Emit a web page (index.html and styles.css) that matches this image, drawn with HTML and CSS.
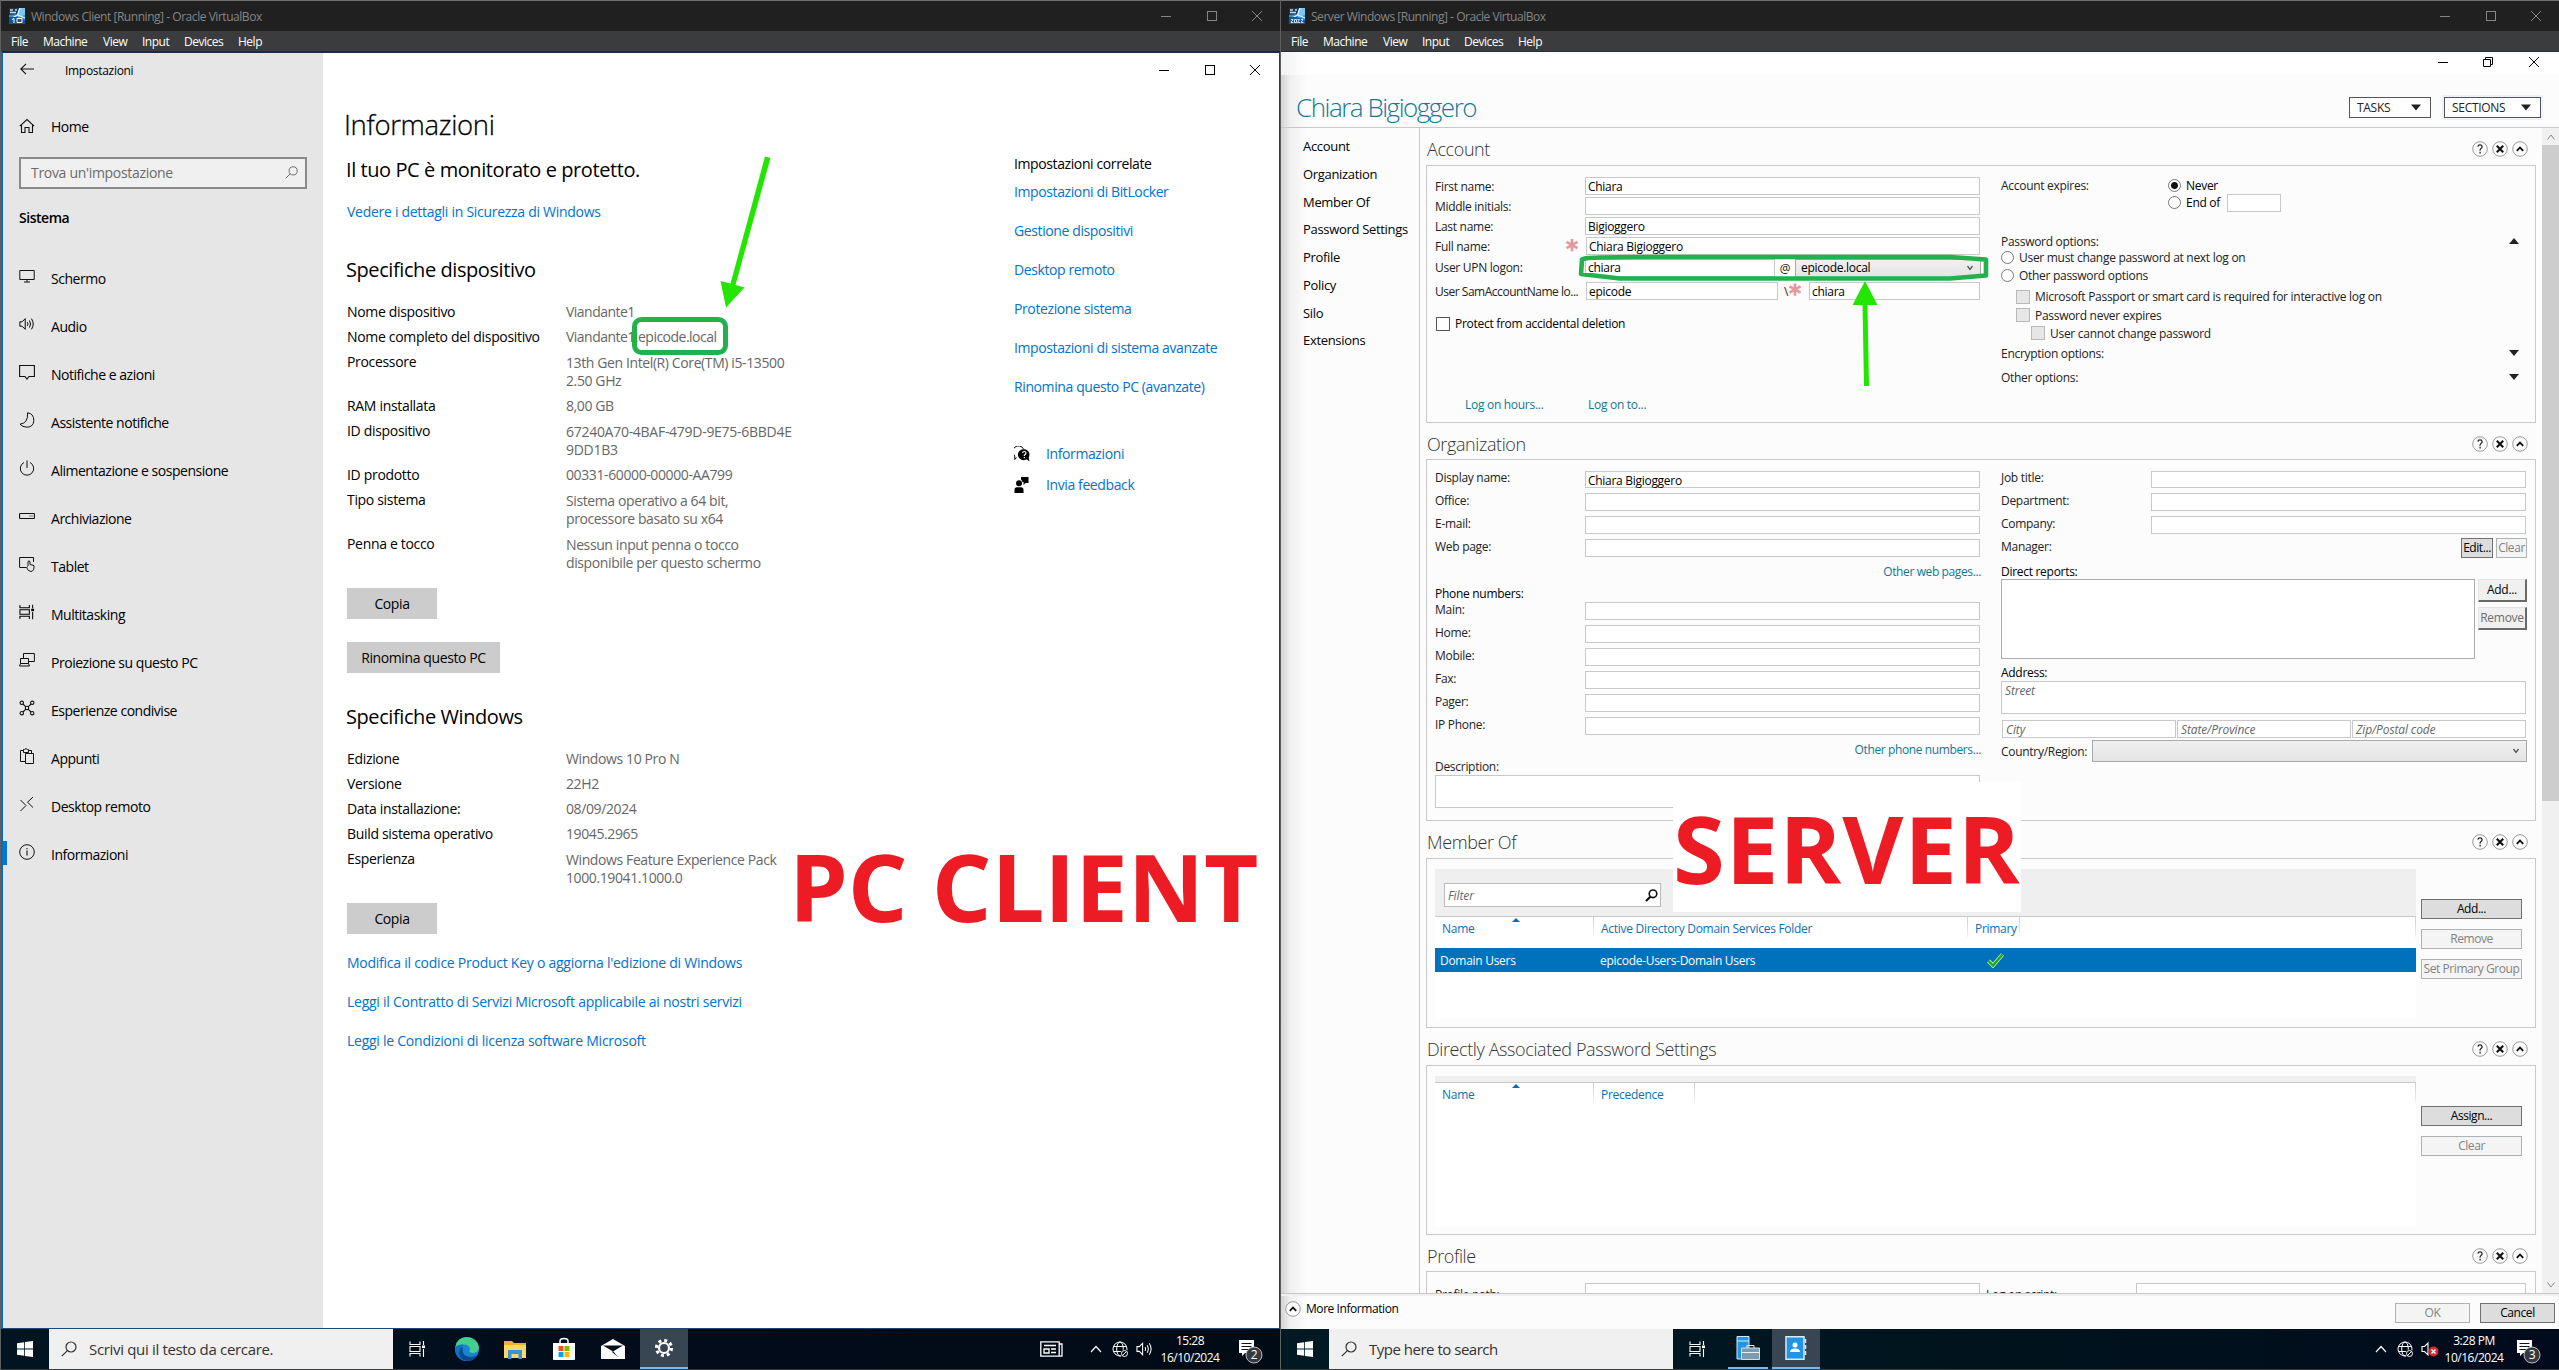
FILE: index.html
```html
<!DOCTYPE html>
<html lang="it">
<head>
<meta charset="utf-8">
<title>Oracle VirtualBox</title>
<link rel="stylesheet" href="styles.css">
</head>
<body>
<svg class="defs" width="0" height="0">
  <defs>
    <symbol id="min" viewBox="0 0 10 10"><path d="M0 5.5H10" stroke="currentColor"/></symbol>
    <symbol id="max" viewBox="0 0 10 10"><rect x=".5" y=".5" width="9" height="9" fill="none" stroke="currentColor"/></symbol>
    <symbol id="restore" viewBox="0 0 10 10"><path d="M.5 2.5H7.5V9.500H.5ZM2.500 2.500V.5H9.500V7.500H7.500" fill="none" stroke="currentColor"/></symbol>
    <symbol id="close" viewBox="0 0 10 10"><path d="M0 0L10 10M10 0L0 10" stroke="currentColor"/></symbol>
    <symbol id="ask" viewBox="0 0 16 16"><circle cx="8" cy="8" r="7.300" fill="#fbfbfb" stroke="#9a9a9a"/><path d="M5.900 5.600Q6.100 3.900 8 3.900T10.100 5.700Q10.100 6.800 9 7.500T8.100 9.600M8.100 10.800V12.400" fill="none" stroke="#222" stroke-width="1.300"/></symbol>
    <symbol id="xc" viewBox="0 0 16 16"><circle cx="8" cy="8" r="7.300" fill="#fbfbfb" stroke="#9a9a9a"/><path d="M4.800 4.800L11.200 11.200M11.200 4.800L4.800 11.200" stroke="#111" stroke-width="2.100"/></symbol>
    <symbol id="up" viewBox="0 0 16 16"><circle cx="8" cy="8" r="7.300" fill="#fbfbfb" stroke="#9a9a9a"/><path d="M4.800 9.800L8 6.500L11.200 9.800" fill="none" stroke="#111" stroke-width="1.800"/></symbol>
    <symbol id="star" viewBox="0 0 16 16"><path d="M8 1V15M1.700 4.500L14.300 11.500M14.300 4.500L1.700 11.500" stroke="#e5989b" stroke-width="3"/></symbol>
    <symbol id="tdown" viewBox="0 0 10 6"><path d="M0 0H10L5 6Z" fill="#222"/></symbol>
    <symbol id="tup" viewBox="0 0 10 6"><path d="M0 6H10L5 0Z" fill="#222"/></symbol>
    <symbol id="chev" viewBox="0 0 8 6"><path d="M1.500 1L4 4.500L6.500 1" fill="none" stroke="#555" stroke-width="1.300"/></symbol>
    <symbol id="win" viewBox="0 0 16 16"><path d="M0 2.200L7.200 1.200V7.600H0ZM8 1.100L16 0V7.600H8ZM0 8.400H7.200V14.800L0 13.800ZM8 8.400H16V16L8 14.900Z" fill="#fff"/></symbol>
    <symbol id="mag" viewBox="0 0 16 16"><circle cx="10" cy="6" r="5" fill="none" stroke="currentColor" stroke-width="1.200"/><path d="M6.400 9.600L.8 15.200" stroke="currentColor" stroke-width="1.200"/></symbol>
    <symbol id="task" viewBox="0 0 17 16"><path d="M1 .5V3.500H11V.5M1 15.500V12.500H11V15.500M1 5.500H11V10.500H1ZM14.500 0V4M14.500 8V16" fill="none" stroke="currentColor" stroke-width="1.100"/><rect x="13" y="4.500" width="3" height="2.600" fill="currentColor"/></symbol>
    <symbol id="tchev" viewBox="0 0 12 8"><path d="M1 7L6 1.500L11 7" fill="none" stroke="#fff" stroke-width="1.200"/></symbol>
    <symbol id="globe" viewBox="0 0 17 17"><circle cx="8" cy="8" r="7" fill="none" stroke="#fff"/><ellipse cx="8" cy="8" rx="3.300" ry="7" fill="none" stroke="#fff"/><path d="M1.500 5.500H14.500M1.500 10.500H9" stroke="#fff"/><circle cx="12.500" cy="12.500" r="4" fill="#020c18"/><circle cx="12.500" cy="12.500" r="3" fill="none" stroke="#fff"/><path d="M10.500 14.500L14.500 10.500" stroke="#fff"/></symbol>
    <symbol id="sound" viewBox="0 0 18 16"><path d="M1 5.500H3.500L7 2V14L3.500 10.500H1ZM9.500 6Q10.800 8 9.500 10M11.800 4Q14.200 8 11.800 12M14 2Q18 8 14 14" fill="none" stroke="currentColor" stroke-width="1.100"/></symbol>
    <symbol id="mute" viewBox="0 0 18 16"><path d="M1 5.500H3.500L7 2V14L3.500 10.500H1Z" fill="none" stroke="#fff" stroke-width="1.100"/><circle cx="12.500" cy="10.500" r="5" fill="#d7282f"/><path d="M10.500 8.500L14.500 12.500M14.500 8.500L10.500 12.500" stroke="#fff" stroke-width="1.400"/></symbol>
    <symbol id="note" viewBox="0 0 26 26"><path d="M1 1H16V14H7L4 17V14H1Z" fill="#fff"/><path d="M3.500 4.500H13.500M3.500 7.500H13.500M3.500 10.500H13.500" stroke="#06121f"/><circle cx="16" cy="16" r="8" fill="#343a40" stroke="#bbb"/></symbol>
    <symbol id="vbox" viewBox="0 0 16 16"><rect width="16" height="16" fill="#2a93dc"/><path d="M0 0H10L8 6L0 7Z" fill="#1b3850"/><path d="M10 0H16V7L9 9Z" fill="#7cc6f2"/><path d="M1 2H4M1 4.500H7M6 2H8" stroke="#d4dde3" stroke-width="1.300"/><path d="M11 0L8.500 7L16 10M8.500 7L3 10" stroke="#e8f5fc" stroke-width="1.200" fill="none"/><path d="M0 9L7 9L16 12V16H0Z" fill="#0e58a0"/></symbol>
  </defs>
</svg>
<div class="desk">

<!-- ================= client machine ================= -->
<section class="vm">
  <header class="title"><svg class="i16" viewBox="0 0 16 16"><use href="#vbox"/><path d="M3 11.500L5 10.500V15M8 10.500H13V14.500H8Z" stroke="#fff" fill="none"/></svg><span>Windows Client [Running] - Oracle VirtualBox</span>
    <div class="ctl"><i><svg><use href="#min"/></svg></i><i><svg><use href="#max"/></svg></i><i><svg><use href="#close"/></svg></i></div></header>
  <nav class="menu"><span class="m1">File</span><span class="m2">Machine</span><span class="m3">View</span><span class="m4">Input</span><span class="m5">Devices</span><span class="m6">Help</span></nav>
  <div class="settings">
    <aside class="side">
      <div class="back"><svg width="14" height="12" viewBox="0 0 14 12"><path d="M14 6H1M6 .8L.8 6L6 11.200" fill="none" stroke="#111" stroke-width="1.100"/></svg><span>Impostazioni</span></div>
      <div class="item home"><svg viewBox="0 0 16 16"><path d="M.8 8.200L8 1.500L15.200 8.200M2.500 6.800V14.500H6V9.500H10V14.500H13.500V6.800" fill="none" stroke="#111" stroke-width="1.100"/></svg>Home</div>
      <div class="find"><span>Trova un'impostazione</span><svg width="13" height="13"><use href="#mag"/></svg></div>
      <div class="sys">Sistema</div>
      <div class="item"><svg viewBox="0 0 16 16"><path d="M.8 2.500H15.200V11.500H.8ZM8 11.500V14M5 14H11" fill="none" stroke="#111"/></svg>Schermo</div>
      <div class="item"><svg viewBox="0 0 18 16"><use href="#sound" width="18" height="16"/></svg>Audio</div>
      <div class="item"><svg viewBox="0 0 16 16"><path d="M.6 1.500H15.400V12.500H10L8 15L6 12.500H.6Z" fill="none" stroke="#111" stroke-width="1.100"/></svg>Notifiche e azioni</div>
      <div class="item"><svg viewBox="0 0 16 16"><path d="M8.500 .8Q14.800 1.500 14.800 8.500Q14.500 15 8 15.200Q3.500 15.200 1 12.200Q9.500 11 8.500 .8Z" fill="none" stroke="#111"/></svg>Assistente notifiche</div>
      <div class="item"><svg viewBox="0 0 16 16"><path d="M8 .5V8M5 2.500A6.700 6.700 0 1 0 11 2.500" fill="none" stroke="#111"/></svg>Alimentazione e sospensione</div>
      <div class="item"><svg viewBox="0 0 16 16"><rect x=".6" y="5.500" width="14.800" height="5" rx=".6" fill="none" stroke="#111" stroke-width="1.100"/><path d="M10.500 8H11.500M12.500 8H13.500" stroke="#111"/></svg>Archiviazione</div>
      <div class="item"><svg viewBox="0 0 16 16"><path d="M7 11.500H.6V1.500H14.500V6M9 10V5.500Q10 4.300 11 5.500V8.500L15 9.500Q15.500 15 12 15.500Q9 15.500 7.500 11.500Q8 10.300 9 11" fill="none" stroke="#111"/></svg>Tablet</div>
      <div class="item"><svg viewBox="0 0 17 16"><use href="#task" width="17" height="16"/></svg>Multitasking</div>
      <div class="item"><svg viewBox="0 0 16 16"><path d="M4.500 7V1.500H15.400V9.500H10M1.500 6.500H9.500V11.500H1.500ZM.5 14H10.500L9.500 11.500H1.500Z" fill="none" stroke="#111"/></svg>Proiezione su questo PC</div>
      <div class="item"><svg viewBox="0 0 16 16"><g fill="none" stroke="#111" stroke-width="1.100"><circle cx="2.800" cy="2.800" r="1.700"/><circle cx="13.200" cy="2.800" r="1.700"/><circle cx="2.800" cy="13.200" r="1.700"/><circle cx="13.200" cy="13.200" r="1.700"/><circle cx="8" cy="8" r="1.700"/><path d="M4 4L6.800 6.800M12 4L9.200 6.800M4 12L6.800 9.200M12 12L9.200 9.200"/></g></svg>Esperienze condivise</div>
      <div class="item"><svg viewBox="0 0 16 16"><path d="M6.500 13.500H1.500V2.500H4.500M9.500 2.500H12.500V5.500M4.500 1.500H5.500Q7 -.5 8.500 1.500H9.500V4.500H4.500ZM6.500 5.500H14.500V15.500H6.500Z" fill="none" stroke="#111"/></svg>Appunti</div>
      <div class="item"><svg viewBox="0 0 16 16"><path d="M1.500 4L7 9.500L1.500 15M14 1L8.500 6.200L14 11.500" fill="none" stroke="#111"/></svg>Desktop remoto</div>
      <div class="item on"><svg viewBox="0 0 16 16"><circle cx="8" cy="8" r="7.300" fill="none" stroke="#111"/><path d="M8 6.500V11.500M8 4V5.200" stroke="#111" stroke-width="1.100"/></svg>Informazioni</div>
    </aside>
    <main class="info">
      <div class="ctl inner"><i><svg><use href="#min"/></svg></i><i><svg><use href="#max"/></svg></i><i><svg><use href="#close"/></svg></i></div>
      <div class="cols">
        <div class="specs">
          <h1>Informazioni</h1>
          <h2 class="ok">Il tuo PC è monitorato e protetto.</h2>
          <a class="sec">Vedere i dettagli in Sicurezza di Windows</a>
          <h2 class="dev">Specifiche dispositivo</h2>
          <dl>
            <dt>Nome dispositivo</dt><dd class="host">Viandante1</dd>
            <dt>Nome completo del dispositivo</dt><dd class="host">Viandante1.epicode.local</dd>
            <dt>Processore</dt><dd class="two">13th Gen Intel(R) Core(TM) i5-13500<br>2.50 GHz</dd>
            <dt>RAM installata</dt><dd>8,00 GB</dd>
            <dt>ID dispositivo</dt><dd class="two id">67240A70-4BAF-479D-9E75-6BBD4E<br>9DD1B3</dd>
            <dt>ID prodotto</dt><dd>00331-60000-00000-AA799</dd>
            <dt>Tipo sistema</dt><dd class="two">Sistema operativo a 64 bit,<br>processore basato su x64</dd>
            <dt>Penna e tocco</dt><dd class="two">Nessun input penna o tocco<br>disponibile per questo schermo</dd>
          </dl>
          <button class="gb">Copia</button>
          <button class="gb wide">Rinomina questo PC</button>
          <h2 class="wins">Specifiche Windows</h2>
          <dl>
            <dt>Edizione</dt><dd>Windows 10 Pro N</dd>
            <dt>Versione</dt><dd>22H2</dd>
            <dt>Data installazione:</dt><dd>08/09/2024</dd>
            <dt>Build sistema operativo</dt><dd>19045.2965</dd>
            <dt>Esperienza</dt><dd class="two">Windows Feature Experience Pack<br>1000.19041.1000.0</dd>
          </dl>
          <button class="gb">Copia</button>
          <div class="legal"><a>Modifica il codice Product Key o aggiorna l'edizione di Windows</a><a>Leggi il Contratto di Servizi Microsoft applicabile ai nostri servizi</a><a>Leggi le Condizioni di licenza software Microsoft</a></div>
        </div>
        <div class="related">
          <p>Impostazioni correlate</p>
          <a>Impostazioni di BitLocker</a><a>Gestione dispositivi</a><a>Desktop remoto</a><a>Protezione sistema</a><a>Impostazioni di sistema avanzate</a><a>Rinomina questo PC (avanzate)</a>
          <div class="help">
            <a><svg class="i16" viewBox="0 0 16 16"><path class="line" d="M2.500 11.500L.8 13.500V10A5.700 5.700 0 1 1 9.500 3"/><path d="M10.200 3.200A5.500 5.500 0 1 0 12.500 13.200L15.500 15.500L14.700 11.500A5.500 5.500 0 0 0 10.200 3.200Z"/><path class="q" d="M8.500 7Q8.800 5.500 10.300 5.500T12 7Q12 8.200 10.300 9.200V10M10.300 11V12.300"/></svg>Informazioni</a>
            <a><svg class="i16" viewBox="0 0 16 16"><circle cx="5" cy="6.200" r="3"/><path d="M.5 16V13Q.5 10.200 3 10.200H7Q9.500 10.200 9.500 13V16ZM7 0H14.500V6H11.500L9.500 8V5H8.500Q8 3 7 2.500Z"/></svg>Invia feedback</a>
          </div>
        </div>
      </div>
    </main>
  </div>
  <footer class="bar">
    <span class="start"><svg class="i16"><use href="#win"/></svg></span>
    <span class="search it-search"><svg class="i16"><use href="#mag"/></svg>Scrivi qui il testo da cercare.</span>
    <span class="tile tv"><svg width="17" height="16"><use href="#task"/></svg></span>
    <span class="tile"><svg width="24" height="24" viewBox="0 0 24 24"><circle cx="12" cy="12" r="12" fill="#1a84d2"/><path d="M.5 10Q2 0 12 0Q22 1 24 10Q24 16 17 16Q13 15.500 15 12.500Q15 8 9 7.500Q3 7.500 .5 10Z" fill="#43cf8c"/><path d="M.5 10Q3 7 8 7.500Q5 16 9 20Q12 23 15 23.500Q3 26 0 14Z" fill="#1270c4"/><path d="M8 10Q6 19 15 20Q19 20 22 18Q18 24.500 12 24Q3 22 4.500 15Q5 11 8 10Z" fill="#0a4a93"/></svg></span>
    <span class="tile"><svg width="24" height="20" viewBox="0 0 24 20"><path d="M1 2H9L11 4H23V19H1Z" fill="#f0b429"/><path d="M1 6H23V19H1Z" fill="#ffd766"/><path d="M5 11H19V20H15.500V15H8.500V20H5Z" fill="#3a93d8"/></svg></span>
    <span class="tile"><svg width="24" height="24" viewBox="0 0 24 24"><path d="M1 6H23V22Q23 23 22 23H2Q1 23 1 22Z" fill="#fff"/><path d="M8 6V4Q8 1.500 12 1.500T16 4V6" fill="none" stroke="#fff" stroke-width="1.500"/><path d="M6.500 9H11.500V14H6.500Z" fill="#f25022"/><path d="M12.500 9H17.500V14H12.500Z" fill="#7fba00"/><path d="M6.500 15H11.500V20H6.500Z" fill="#00a4ef"/><path d="M12.500 15H17.500V20H12.500Z" fill="#ffb900"/></svg></span>
    <span class="tile"><svg width="24" height="22" viewBox="0 0 24 22"><path d="M0 8L12 1L24 8V21H0Z" fill="#fff"/><path d="M2 7.500H22L12 13.500ZM12 13L17 19L11 14Z" fill="#04101d"/></svg></span>
    <span class="tile act"><svg width="20" height="20" viewBox="0 0 20 20"><circle cx="10" cy="10" r="5" fill="none" stroke="#fff" stroke-width="2.200"/><circle cx="10" cy="10" r="7.600" fill="none" stroke="#fff" stroke-width="3" stroke-dasharray="3 2.970"/></svg></span>
    <span class="tray t1">
      <svg width="23" height="16" viewBox="0 0 23 16"><path d="M.8 .8H19.200V15.200H.8ZM19.200 3H22V15.200H19M4 4.500H16M4 8H9V12H4ZM11 8H16M11 11.500H16" fill="none" stroke="#fff" stroke-width="1.300"/></svg>
      <svg class="c" width="12" height="8"><use href="#tchev"/></svg><svg class="g" width="17" height="17"><use href="#globe"/></svg><svg class="s" width="17" height="16"><use href="#sound"/></svg>
      <span class="clock">15:28<br>16/10/2024</span>
      <span class="notes"><svg width="26" height="26"><use href="#note"/></svg><b>2</b></span>
    </span>
  </footer>
</section>

<!-- ================= server machine ================= -->
<section class="vm server">
  <header class="title"><svg class="i16" viewBox="0 0 16 16"><use href="#vbox"/><path d="M2 11.500H4L2 14.500H4.500M5.500 11.500H7.500V14.500H5.500ZM8.500 11.500H10.500L8.500 14.500H11M12 11.500H14L12 14.500H14.500" stroke="#fff" fill="none" stroke-width=".8"/></svg><span>Server Windows [Running] - Oracle VirtualBox</span>
    <div class="ctl"><i><svg><use href="#min"/></svg></i><i><svg><use href="#max"/></svg></i><i><svg><use href="#close"/></svg></i></div></header>
  <nav class="menu"><span class="m1">File</span><span class="m2">Machine</span><span class="m3">View</span><span class="m4">Input</span><span class="m5">Devices</span><span class="m6">Help</span></nav>
  <div class="adac">
    <div class="ctl inner"><i><svg><use href="#min"/></svg></i><i><svg><use href="#restore"/></svg></i><i><svg><use href="#close"/></svg></i></div>
    <div class="who"><h1>Chiara Bigioggero</h1><button class="dd">TASKS<svg width="10" height="7"><use href="#tdown"/></svg></button><button class="dd sel">SECTIONS<svg width="10" height="7"><use href="#tdown"/></svg></button></div>
    <div class="body">
      <nav class="toc"><a>Account</a><a>Organization</a><a>Member Of</a><a>Password Settings</a><a>Profile</a><a>Policy</a><a>Silo</a><a>Extensions</a></nav>
      <div class="pages">
        <div class="sh">Account<span><svg><use href="#ask"/></svg><svg><use href="#xc"/></svg><svg><use href="#up"/></svg></span></div>
        <div class="box acc">
          <div class="l">
            <div class="r20"><label>First name:</label><b class="in">Chiara</b></div>
            <div class="r20"><label>Middle initials:</label><b class="in"></b></div>
            <div class="r20"><label>Last name:</label><b class="in">Bigioggero</b></div>
            <div class="r20"><label>Full name:</label><svg class="req"><use href="#star"/></svg><b class="in full">Chiara Bigioggero</b></div>
            <div class="upn"><label>User UPN logon:</label><b class="in">chiara</b><em>@</em><b class="combo">epicode.local<svg width="8" height="6"><use href="#chev"/></svg></b></div>
            <div class="sam"><label>User SamAccountName lo...</label><b class="in dom">epicode</b><em>\</em><svg class="req2"><use href="#star"/></svg><b class="in">chiara</b></div>
            <div class="prot"><i class="cb"></i>Protect from accidental deletion</div>
            <div class="logon"><a>Log on hours...</a><a>Log on to...</a></div>
          </div>
          <div class="r">
            <div class="exp1"><label>Account expires:</label><i class="rb dot"></i><span class="blk">Never</span></div>
            <div class="exp2"><i class="rb"></i><span class="blk">End of</span><b class="in"></b></div>
            <div class="grp pw">Password options:<svg><use href="#tup"/></svg></div>
            <div class="o"><i class="rb"></i>User must change password at next log on</div>
            <div class="o"><i class="rb"></i>Other password options</div>
            <div class="o k1"><i class="cb off"></i>Microsoft Passport or smart card is required for interactive log on</div>
            <div class="o k2"><i class="cb off"></i>Password never expires</div>
            <div class="o k3"><i class="cb off"></i>User cannot change password</div>
            <div class="grp enc">Encryption options:<svg><use href="#tdown"/></svg></div>
            <div class="grp oth">Other options:<svg><use href="#tdown"/></svg></div>
          </div>
        </div>
        <div class="sh s36">Organization<span><svg><use href="#ask"/></svg><svg><use href="#xc"/></svg><svg><use href="#up"/></svg></span></div>
        <div class="box org">
          <div class="l">
            <div class="r23 first"><label>Display name:</label><b class="in">Chiara Bigioggero</b></div>
            <div class="r23"><label>Office:</label><b class="in"></b></div>
            <div class="r23"><label>E-mail:</label><b class="in"></b></div>
            <div class="r23"><label>Web page:</label><b class="in"></b></div>
            <div class="more"><a>Other web pages...</a></div>
            <div class="ph">Phone numbers:</div>
            <div class="r23"><label>Main:</label><b class="in"></b></div>
            <div class="r23"><label>Home:</label><b class="in"></b></div>
            <div class="r23"><label>Mobile:</label><b class="in"></b></div>
            <div class="r23"><label>Fax:</label><b class="in"></b></div>
            <div class="r23"><label>Pager:</label><b class="in"></b></div>
            <div class="r23"><label>IP Phone:</label><b class="in"></b></div>
            <div class="more"><a>Other phone numbers...</a></div>
            <div class="desc">Description:</div>
            <b class="in area"></b>
          </div>
          <div class="r">
            <div class="r23 first"><label>Job title:</label><b class="in"></b></div>
            <div class="r23"><label>Department:</label><b class="in"></b></div>
            <div class="r23"><label>Company:</label><b class="in"></b></div>
            <div class="r23 man"><label>Manager:</label><button class="wb">Edit...</button><button class="wb dis">Clear</button></div>
            <div class="dr">Direct reports:</div>
            <div class="list"><b class="in"></b><div><button class="cl">Add...</button><button class="cl dis">Remove</button></div></div>
            <div class="adr">Address:</div>
            <b class="in area it">Street</b>
            <div class="city"><b class="in it">City</b><b class="in it">State/Province</b><b class="in it">Zip/Postal code</b></div>
            <div class="country"><label>Country/Region:</label><b class="combo"><svg width="8" height="6"><use href="#chev"/></svg></b></div>
          </div>
        </div>
        <div class="sh">Member Of<span><svg><use href="#ask"/></svg><svg><use href="#xc"/></svg><svg><use href="#up"/></svg></span></div>
        <div class="box tb">
          <div class="table">
            <div class="tools"><b class="in it">Filter<svg width="13" height="13" viewBox="0 0 13 13"><circle cx="8" cy="4.800" r="3.800" fill="none" stroke="#111" stroke-width="1.600"/><path d="M5.300 7.800L1 12" stroke="#111" stroke-width="2.200"/></svg></b></div>
            <div class="th mem"><span>Name<i></i></span><span>Active Directory Domain Services Folder</span><span>Primary</span><span></span></div>
            <div class="tr"><span>Domain Users</span><span>epicode-Users-Domain Users</span><svg width="17" height="15" viewBox="0 0 17 15"><path d="M1.500 8L6 12.500L15.500 1.500" fill="none" stroke="#c5f0a0" stroke-width="4"/><path d="M1.500 8L6 12.500L15.500 1.500" fill="none" stroke="#1fa51f" stroke-width="2.400"/></svg></div>
          </div>
          <div class="acts"><button class="wb">Add...</button><button class="wb dis">Remove</button><button class="wb dis">Set Primary Group</button></div>
        </div>
        <div class="sh">Directly Associated Password Settings<span><svg><use href="#ask"/></svg><svg><use href="#xc"/></svg><svg><use href="#up"/></svg></span></div>
        <div class="box tb">
          <div class="table">
            <div class="tools thin"></div>
            <div class="th das"><span>Name<i></i></span><span>Precedence</span><span></span></div>
          </div>
          <div class="acts"><button class="wb">Assign...</button><button class="wb dis">Clear</button></div>
        </div>
        <div class="sh s36">Profile<span><svg><use href="#ask"/></svg><svg><use href="#xc"/></svg><svg><use href="#up"/></svg></span></div>
        <div class="box prof"><label>Profile path:</label><b class="in"></b><label class="scr">Log on script:</label><b class="in last"></b></div>
      </div>
      <div class="scroll"><i><svg width="8" height="6" viewBox="0 0 8 6"><path d="M.5 5.500L4 1L7.500 5.500" fill="none" stroke="#888"/></svg></i><b></b><i class="dn"><svg width="8" height="6" viewBox="0 0 8 6"><path d="M.5 .5L4 5L7.500 .5" fill="none" stroke="#888"/></svg></i></div>
    </div>
    <div class="foot"><svg class="i16"><use href="#up"/></svg><span>More Information</span><button class="wb dis">OK</button><button class="wb">Cancel</button></div>
  </div>
  <footer class="bar">
    <span class="start"><svg class="i16"><use href="#win"/></svg></span>
    <span class="search"><svg class="i16"><use href="#mag"/></svg>Type here to search</span>
    <span class="tile tv"><svg width="17" height="16"><use href="#task"/></svg></span>
    <span class="tile run"><svg width="24" height="24" viewBox="0 0 24 24"><path d="M1 .5H13V23H1Z" fill="#2196e3" stroke="#d6ecfa"/><path d="M1 5H13" stroke="#d6ecfa"/><path d="M5.500 12H23.500V23.500H5.500Z" fill="#7d9bb0" stroke="#cfe0ea"/><path d="M11 12V9.500H18V12M5.500 16.500H23.500" fill="none" stroke="#e6f0f5"/></svg></span>
    <span class="tile act two"><svg width="22" height="24" viewBox="0 0 22 24"><path d="M1 .8H19V23.200H1Z" fill="#1f95e4" stroke="#d6ecfa" stroke-width="1.500"/><path d="M20.500 3V7M20.500 9V13M20.500 15V19" stroke="#d6ecfa" stroke-width="1.500"/><circle cx="10" cy="9" r="2.500" fill="#fff"/><path d="M5 16Q5 12.500 10 12.500T15 16Z" fill="#fff"/></svg></span>
    <span class="tray t2">
      <svg class="c" width="12" height="8"><use href="#tchev"/></svg><svg class="g" width="17" height="17"><use href="#globe"/></svg><svg class="s" width="18" height="16"><use href="#mute"/></svg>
      <span class="clock">3:28 PM<br>10/16/2024</span>
      <span class="notes"><svg width="26" height="26"><use href="#note"/></svg><b>3</b></span>
    </span>
  </footer>
</section>

<!-- annotations drawn over both machines -->
<div class="big pc">PC CLIENT</div>
<div class="big srv">SERVER</div>
<svg class="marks" width="2559" height="1370" viewBox="0 0 2559 1370">
  <rect x="634.500" y="319.500" width="91" height="33" rx="7" fill="none" stroke="#22b14c" stroke-width="5"/>
  <path d="M1582 260Q1581 258 1600 257.500L1640 257H1950L1986 259.500V275.500L1950 278.500H1620L1581 274Z" fill="none" stroke="#22b14c" stroke-width="4.600" stroke-linejoin="round"/>
  <g fill="#22e600"><path d="M765 156.500L770.500 158L735.500 285L744.500 287.500L726 307.500L720.500 281L730.500 283.500Z"/><path d="M1865 281L1877.500 305H1867.500L1869 386H1864L1862.500 305H1852.500Z"/></g>
</svg>
</div>
</body>
</html>
```
FILE: styles.css
```css
* { box-sizing: border-box; }
body { margin: 0; background: #202020; font-family: "Open Sans", "Noto Sans", sans-serif; font-size: 14px; letter-spacing: -0.035em; color: #000; }
h1, h2, p, dl, dd { margin: 0; font-weight: 400; }
button { font: inherit; letter-spacing: inherit; padding: 0; border-radius: 0; }
b, i, em { font-weight: 400; font-style: normal; }
svg { display: block; flex: none; }
.defs { position: absolute; }
.i16 { width: 16px; height: 16px; }
.desk { position: relative; display: flex; width: 2559px; height: 1370px; overflow: hidden; }
.vm { width: 1280px; height: 1370px; display: flex; flex-direction: column; border-top: 1px solid #6f716f; border-left: 1px solid #5d5f60; border-bottom: 1px solid #3a3c3e; white-space: nowrap; }
.vm.server { width: 1279px; }

.title { height: 30px; background: #202020; color: #868686; font-size: 12px; display: flex; align-items: center; padding-left: 8px; letter-spacing: -0.038em; }
.title > span { margin-left: 6px; }
.ctl { display: flex; margin-left: auto; }
.ctl i { width: 45.5px; display: flex; justify-content: center; }
.ctl svg { width: 10px; height: 10px; }
.title .ctl { color: #858585; }
.menu { height: 20px; background: #3b3c3e; color: #fff; font-size: 12px; line-height: 21px; display: flex; padding-left: 10px; }
.m1 { width: 32px; } .m2 { width: 60px; } .m3 { width: 39px; } .m4 { width: 42px; } .m5 { width: 54px; }

/* settings */
.settings { height: 1278px; border-top: 2px solid #1b2a4a; border-left: 2px solid #0a6cc4; border-right: 1px solid #1f3a6e; border-bottom: 1px solid #1c4a78; display: flex; background: #fff; }
.side { width: 320px; background: #e6e6e6; letter-spacing: -0.034em; }
.back { height: 34px; display: flex; align-items: center; padding-left: 17px; font-size: 12px; }
.back svg { margin-top: -3px; }
.back span { margin-left: 31px; letter-spacing: -0.025em; }
.item { height: 48px; display: flex; align-items: center; padding-left: 16px; position: relative; }
.item svg { width: 16px; height: 16px; margin: -4px 16px 0 0; }
.item.home { margin-top: 15px; }
.item.home svg { margin-top: -1px; }
.item.on::before { content: ""; position: absolute; left: 0; top: 11px; width: 4px; height: 24px; background: #0078d7; }
.find { margin: 7px 0 0 16px; width: 288px; height: 32px; border: 2px solid #8a8a8a; background: #f0f0f0; color: #6b6b6b; display: flex; align-items: center; justify-content: space-between; padding: 0 7px 1px 10px; letter-spacing: -0.022em; }
.sys { margin: 17px 0 24px 16px; height: 24px; line-height: 24px; font-weight: 600; }
.info { flex: 1; letter-spacing: -0.02em; }
.ctl.inner { height: 34px; align-items: center; justify-content: flex-end; }
.info .ctl.inner { padding-right: 1px; }
.cols { display: flex; }
.specs { width: 691px; padding: 18px 0 0 24px; }
.specs h1 { margin-left: -3px; height: 38px; line-height: 39px; font-size: 27.5px; font-weight: 300; -webkit-text-stroke: .3px #000; letter-spacing: -0.012em; }
h2 { font-size: 20px; line-height: 27px; height: 26px; margin-left: -1px; letter-spacing: -0.021em; }
h2.ok { margin-top: 13px; }
.info a { color: #0072d0; }
.sec { display: block; margin-top: 19px; line-height: 21px; }
h2.dev { margin-top: 34px; margin-bottom: 21px; }
h2.wins { margin-top: 30px; margin-bottom: 21px; }
dl { display: grid; grid-template-columns: 219px 1fr; line-height: 18px; }
dt { letter-spacing: -0.023em; }
dd { height: 25px; color: #666; letter-spacing: -0.028em; }
dd.two { height: 44px; padding-top: 1px; }
dd.id { letter-spacing: -0.02em; }
dd.host { letter-spacing: -0.037em; }
.gb { display: block; width: 90px; height: 31px; margin-top: 9px; border: 0; background: #ccc; letter-spacing: -0.028em; }
.gb.wide { width: 153px; margin-top: 23px; }
.legal { padding-top: 9px; display: flex; flex-direction: column; letter-spacing: -0.018em; }
.legal a { line-height: 39px; }
.related { padding-top: 68px; display: flex; flex-direction: column; letter-spacing: -0.028em; }
.related p { line-height: 18px; margin-bottom: -1px; }
.related > a { line-height: 39px; }
.help { margin-top: 32px; }
.help a { height: 31px; display: flex; align-items: center; gap: 16px; }
.help svg { fill: #000; }
.help .line { fill: none; stroke: #000; }
.help .q { fill: none; stroke: #fff; stroke-width: 1.2; }

/* taskbar */
.bar { height: 40px; background: linear-gradient(90deg, #001521, #020c1b 45%, #010b16); display: flex; color: #fff; position: relative; }
.server .bar { background: linear-gradient(90deg, #001a24, #00131d 60%, #010a1c); }
.start { width: 48px; display: flex; align-items: center; padding-left: 16px; }
.search { width: 344px; background: #f0f0f0; color: #333; font-size: 15px; display: flex; align-items: center; gap: 12px; padding: 0 0 1px 12px; }
.it-search { letter-spacing: -0.022em; }
.tile { width: 48px; margin-right: .7px; display: flex; align-items: center; justify-content: center; }
.tile.tv { width: 49px; }
.tile.act { background: #384553; border-bottom: 2px solid #76b9ed; margin-left: 3px; }
.tile.run { border-bottom: 2px solid #76b9ed; width: 40px; margin-left: 5px; }
.tile.act.two { margin-left: 4px; }
.tray { margin-left: auto; display: flex; align-items: center; font-size: 12px; letter-spacing: -0.04em; }
.tray.t1 .c { margin-left: 27px; } .g { margin-left: 10px; } .s { margin-left: 7px; }
.clock { width: 64px; text-align: center; line-height: 17px; margin: 0 16px 0 5px; }
.notes { position: relative; width: 26px; margin-right: 16px; }
.notes svg { margin-top: 6px; }
.notes b { position: absolute; left: 12px; top: 14px; width: 8px; text-align: center; line-height: 16px; }
.t2 .clock { margin: 0 10px 0 3px; }
.t2 .notes { margin-right: 17px; }

/* admin center */
.adac { height: 1278px; background: linear-gradient(90deg, rgba(0,0,0,.16), rgba(0,0,0,.05) 9px, transparent 26px), #fcfcfc; font-size: 12px; border-top: 1px solid #2c2d2f; letter-spacing: -0.024em; }
.adac .ctl.inner { height: 23px; background: linear-gradient(90deg, #f2f2f2, #fff 26px); padding: 0 2px 3px 0; }
.adac .inner i:last-child { width: 46px; }
.who { height: 53px; border-bottom: 1px solid #c8c8c8; display: flex; align-items: flex-start; padding: 14px 18px 0 15px; }
.who h1 { font-size: 26px; font-weight: 300; color: #137a9a; line-height: 36px; flex: 1; letter-spacing: -0.057em; }
.dd { height: 21px; margin-top: 8px; border: 1px solid #555; background: #fff; width: 82px; padding: 0 9px 0 7px; display: flex; align-items: center; justify-content: space-between; color: #222; }
.dd.sel { width: 97px; margin-left: 13px; box-shadow: 0 0 0 2px #edf1fd; }
.body { height: 1165px; display: flex; overflow: hidden; }
.toc { width: 139px; border-right: 1px solid #c8c8c8; padding: 5px 0 0 22px; display: flex; flex-direction: column; font-size: 13px; letter-spacing: -0.024em; }
.toc a { line-height: 27.75px; }
.pages { width: 1122px; padding: 0 6px; color: #222; }
.sh { height: 37px; padding: 5px 8px 0 1px; display: flex; align-items: center; justify-content: space-between; font-size: 18px; font-weight: 300; color: #333; letter-spacing: -0.022em; }
.sh span { display: flex; gap: 4px; }
.sh svg { width: 16px; height: 16px; }
.s36 { height: 36px; }
.box { width: 1110px; border: 1px solid #c8c8c8; padding: 0 8px; display: grid; grid-template-columns: 546px 526px; column-gap: 20px; align-content: start; }
.box.acc { height: 258px; padding-top: 11px; }
.box.org { height: 362px; padding-top: 10px; }
.in { display: block; height: 18px; border: 1px solid #c8c8c8; background: #fff; color: #000; line-height: 17px; padding-left: 2px; }
label { flex: none; line-height: 15px; }
.adac a { color: #127795; }
.adac .toc a { color: #000; }
.l > div, .r > div { display: flex; align-items: center; }
.l label { width: 150px; }
.r20 { height: 20px; padding-bottom: 2px; position: relative; }
.r20 .in { flex: 0 0 395px; }
.r20 .in.full { width: 394px; flex: 0 0 394px; margin-left: 1px; }
.req { position: absolute; left: 130px; top: 0; width: 14px; height: 16px; }
.upn { height: 22px; }
.l > .upn label { margin-top: -1px; }
.upn .in { width: 190px; line-height: 15px; }
em { width: 20px; text-align: center; }
.combo { height: 19px; border: 1px solid #aaa; background: linear-gradient(#f0f0f0, #e4e4e4); width: 186px; display: flex; align-items: center; justify-content: space-between; padding: 0 6px 1px 5px; color: #000; }
.sam { height: 24px; }
.sam label { letter-spacing: -0.04em; }
.sam .dom { width: 192px; margin-left: 1px; }
.sam em { width: 10px; text-align: right; }
.req2 { width: 14px; height: 15px; margin: -3px 7px 0 0; }
.sam > .in:last-child { width: 171px; }
.prot { height: 21px; margin-top: 10px; color: #000; }
.cb { width: 14px; height: 14px; border: 1px solid #555; background: #fff; margin: 0 5px 0 1px; flex: none; }
.cb.off { border-color: #b9b9b9; background: #e6e6e6; }
.logon { height: 20px; margin-top: 60px; padding-left: 30px; }
.logon a { width: 123px; }
.rb { width: 13px; height: 13px; border: 1px solid #777; border-radius: 50%; background: #fff; margin-right: 5px; flex: none; }
.rb.dot { background: radial-gradient(#111 3px, #fff 4px); }
.blk { color: #000; }
.exp1 { height: 16px; } .exp1 label { width: 167px; }
.exp2 { height: 19px; padding-left: 167px; }
.exp2 .in { width: 54px; margin-left: auto; margin-right: 246px; }
.grp { justify-content: space-between; padding-right: 8px; height: 18px; }
.grp svg { width: 10px; height: 6px; }
.r > .grp.pw { height: 14px; margin-top: 22px; }
.o { height: 18px; }
.k1 { height: 19px; margin-top: 3px; padding-left: 14px; } .k2 { padding-left: 14px; } .k3 { padding-left: 29px; }
.enc { margin-top: 2px; } .oth { margin-top: 6px; }
.l > .r23, .r > .r23 { height: 23px; align-items: flex-start; }
.r23 .in { width: 395px; }
.first .in { margin-top: 1px; height: 17px; }
.r .r23 label { width: 150px; }
.r .r23 .in { width: 375px; }
.l > .more { height: 18px; justify-content: flex-end; letter-spacing: -0.032em; }
.ph { height: 17px; margin: 5px 0 0; color: #000; }
.desc { height: 17px; }
.in.area { width: 545px; height: 33px; }
.r .in.area { width: 525px; }
.wb { height: 20px; border: 1px solid #707070; background: #ddd; color: #000; width: 32px; line-height: 18px; letter-spacing: -0.036em; }
.wb.dis { border-color: #adb2b5; background: #f4f4f4; color: #838383; }
.man .wb { margin-top: -1px; }
.man .wb:nth-child(2) { margin-left: 310px; margin-right: 3px; }
.man .dis { width: 31px; }
.dr { height: 17px; padding-top: 1px; color: #000; }
.r > .list { align-items: flex-start; gap: 3px; }
.list .in { width: 474px; height: 80px; border-color: #abadb3; }
.cl { display: block; width: 49px; height: 23px; margin-bottom: 5px; border: solid; border-width: 1px 2px 2px 1px; border-color: #e3e3e3 #696969 #696969 #e3e3e3; background: #f0f0f0; color: #000; line-height: 18px; }
.cl.dis { color: #6d6d6d; }
.adr { height: 17px; margin-top: 5px; color: #000; }
.it { font-style: italic; color: #666; padding-left: 3px; letter-spacing: -0.01em; }
.city { margin: 6px 0 2px 1px; gap: 1px; }
.city .in { width: 174px; }
.country .combo { width: 435px; height: 22px; margin-left: auto; justify-content: flex-end; }
.country label { width: 90px; }
.box.tb { height: 170px; padding-top: 10px; display: flex; gap: 5px; }
.table { width: 981px; height: 150px; background: #fff; letter-spacing: -0.024em; }
.tools { height: 47px; background: #efefef; padding: 14px 0 0 9px; }
.tools .in { width: 217px; height: 24px; border-color: #bbb; display: flex; align-items: center; justify-content: space-between; padding-right: 2px; }
.tools.thin { height: 6px; padding: 0; }
.th { border-top: 1px solid #c8c8c8; height: 32px; display: grid; grid-template-columns: 159px 374px 52px 396px; color: #0b6fb8; }
.th.das { grid-template-columns: 159px 101px 721px; }
.th span { height: 20px; border-right: 1px solid; border-image: linear-gradient(#ccc, #f4f4f4) 1; padding: 3px 0 0 7px; position: relative; }
.th i { position: absolute; left: 77px; top: 1px; border: 4px solid transparent; border-bottom: 4px solid #0b6fb8; border-top: 0; }
.tr { height: 24px; background: #0072bc; color: #fff; display: flex; align-items: center; padding-left: 5px; }
.tr span:nth-child(1) { width: 160px; } .tr span:nth-child(2) { width: 387px; }
.acts { width: 101px; padding-top: 30px; }
.acts .wb { display: block; width: 101px; margin-bottom: 10px; }
.box.prof { display: flex; align-items: flex-start; gap: 0; height: 60px; padding-top: 11px; }
.prof label { width: 150px; padding-top: 4px; }
.prof .in { flex: none; width: 395px; margin-right: 6px; }
.prof .in.last { width: 390px; margin-right: 0; }
.scroll { width: 17px; background: #f0f0f0; display: flex; flex-direction: column; margin-left: auto; }
.scroll i { height: 17px; display: flex; align-items: center; justify-content: center; }
.scroll b { height: 656px; background: #cdcdcd; }
.scroll .dn { margin-top: auto; }
.foot { height: 36px; border-top: 1px solid #c8c8c8; box-shadow: inset 0 2px #f0f0f0; display: flex; align-items: center; padding: 0 4px 4px 4px; }
.foot span { margin: -3px auto 0 5px; letter-spacing: -0.036em; }
.foot .i16 { margin-top: -2px; }
.foot .wb { width: 75px; height: 20px; margin: 6px 0 0 10px; }

/* annotations */
.big { position: absolute; color: #ed1c24; font-weight: 700; font-size: 94px; white-space: nowrap; line-height: 130px; letter-spacing: 0; }
.pc { left: 789px; top: 821px; letter-spacing: -0.2px; }
.srv { left: 1673px; top: 782px; width: 348px; height: 130px; background: #fff; line-height: 133px; letter-spacing: .9px; }
.marks { position: absolute; left: 0; top: 0; }
```
